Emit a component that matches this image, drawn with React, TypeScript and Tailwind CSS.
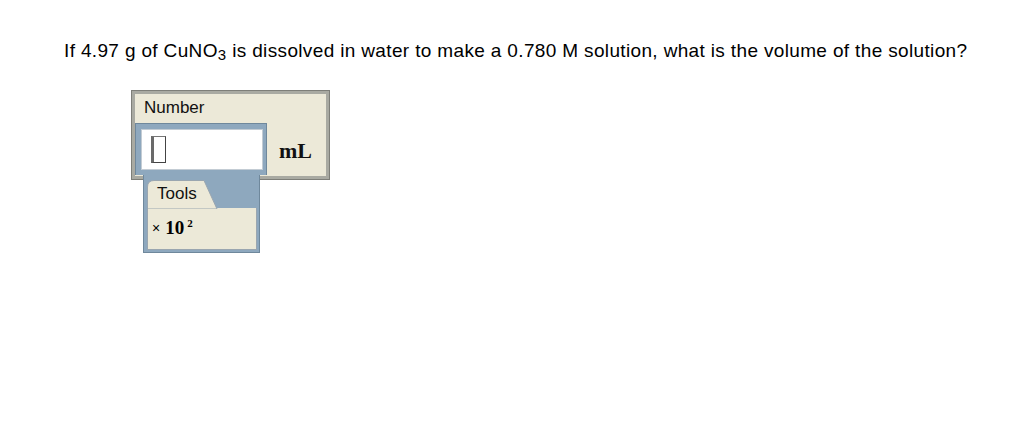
import React from "react";

export default function App() {
  return (
    <div className="w-[1024px] h-[443px] bg-white overflow-hidden">
      <div className="pl-[64px] pt-[40px] h-[62px] text-[19px] leading-[22px] tracking-[0.35px] text-black font-['Liberation_Sans',Arial,sans-serif] whitespace-nowrap">
        If 4.97 g of CuNO<span className="text-[15px] relative top-[3px]">3</span> is dissolved in water to make a 0.780 M solution, what is the volume of the solution?
      </div>
      <div className="ml-[131px] mt-[28px] w-[199px] h-[90px] border border-[#7e7f79]">
        <div className="w-full h-full border-[3px] border-[#a9aaa2] bg-[#ece9d8]">
          <div className="pl-[9px] pt-[4px] text-[17px] leading-[20px] text-[#111] font-['Liberation_Sans',Arial,sans-serif]">
            Number
          </div>
          <div className="flex items-start mt-[5px]">
            <div className="flex flex-col w-[132px]">
              <div className="w-[132px] h-[52px] bg-[#8ea8be] border border-[#6f889c] border-b-0 pt-[5px] pl-[5px]">
                <div className="w-[122px] h-[41px] bg-white border border-[#c3ccd4] pl-[9px] pt-[6px]">
                  <div className="w-[15px] h-[27px] border border-[#444] border-l-[3px] border-l-[#6a6a6a] border-t-[#777] bg-white" />
                </div>
              </div>
              <div className="ml-[8px] w-[117px] h-[78px] bg-[#8ea8be] border border-[#6f889c] border-t-0 pl-[3px] pt-[5px] pr-[2px] pb-[2px] flex flex-col">
                <div className="relative h-[29px]">
                  <svg width="72" height="29" viewBox="0 0 72 29" className="block">
                    <path d="M0.5 29 L0.5 7 Q0.5 0.5 7 0.5 L57 0.5 L70 29 Z" fill="#ece9d8" stroke="#9aa6b0" strokeWidth="1" />
                  </svg>
                  <span className="absolute left-[10px] top-[4px] text-[17px] leading-[20px] text-[#111] font-['Liberation_Sans',Arial,sans-serif]">
                    Tools
                  </span>
                </div>
                <div className="flex-1 -mt-[1px] bg-[#ece9d8] border border-t-0 border-[#9aa6b0] flex items-start pl-[4px] pt-[9px]">
                  <span className="text-[14px] leading-[20px] text-black font-['Liberation_Sans',Arial,sans-serif] mr-[5px] mt-[1px]">×</span>
                  <span className="text-[19px] leading-[20px] font-bold text-black font-['Liberation_Serif','Times_New_Roman',serif] mt-[1px]">10</span>
                  <span className="text-[11px] leading-[11px] font-bold text-black font-['Liberation_Serif','Times_New_Roman',serif] ml-[3px] mt-[1px]">2</span>
                </div>
              </div>
            </div>
            <div className="ml-[12px] mt-[15px] text-[22px] leading-[25px] font-bold text-[#111] font-['Liberation_Serif','Times_New_Roman',serif]">
              mL
            </div>
          </div>
        </div>
      </div>
    </div>
  );
}
